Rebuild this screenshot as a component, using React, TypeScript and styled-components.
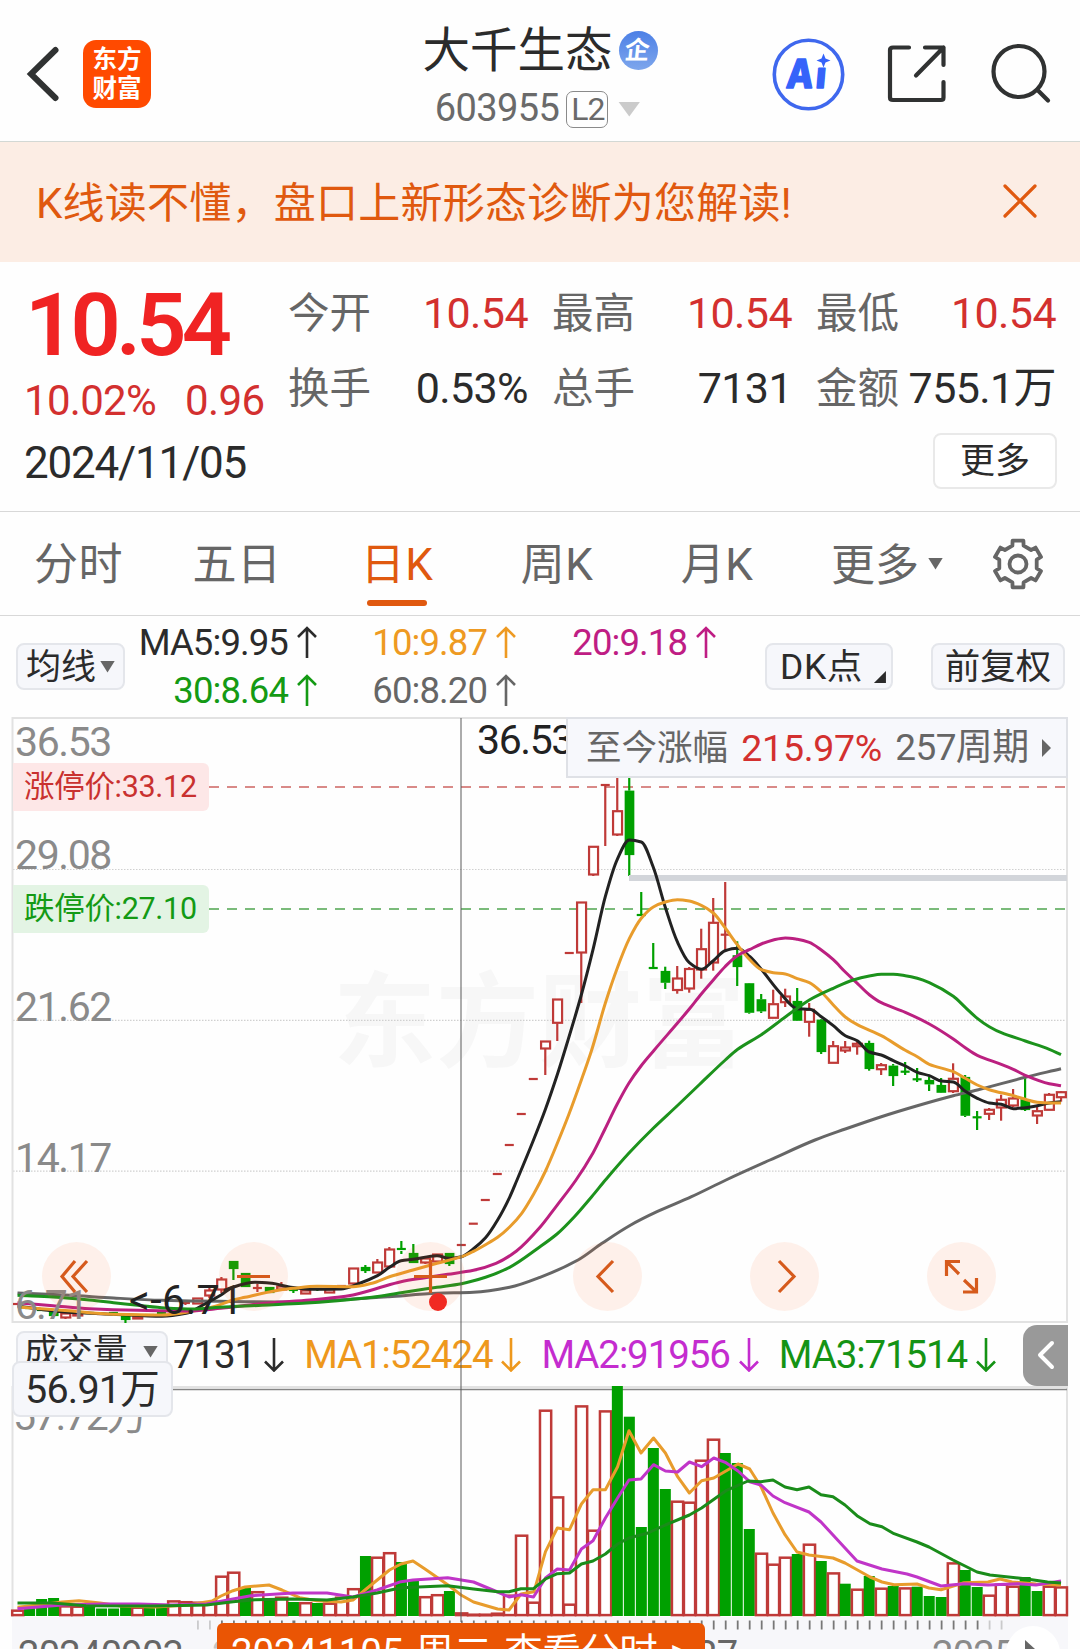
import React from "react";
import styled, { createGlobalStyle } from "styled-components";

const FONT = `Roboto, "Noto Sans CJK SC", sans-serif`;
const RED = "#bf3a38";
const GREEN = "#00a000";
const ORANGE = "#e0590f";

const GlobalStyle = createGlobalStyle`
  * { box-sizing: border-box; }
  html, body { margin: 0; padding: 0; background: #fff; }
  body { font-family: ${FONT}; width: 1080px; height: 1649px; overflow: hidden; }
`;

const Page = styled.main`
  width: 1080px;
  height: 1649px;
  overflow: hidden;
  background: #fefefe;
  color: #2b2b2b;
  display: flex;
  flex-direction: column;
`;

const Txt = styled.span<{ $size: number; $color?: string; $ls?: number; $weight?: number }>`
  font-size: ${(p) => p.$size}px;
  line-height: 1.2;
  color: ${(p) => p.$color ?? "#2b2b2b"};
  letter-spacing: ${(p) => p.$ls ?? 0}px;
  font-weight: ${(p) => p.$weight ?? 400};
  white-space: pre;
`;

/* ---------- header ---------- */

const Header = styled.header`
  height: 142px;
  flex: none;
  display: grid;
  grid-template-columns: 340px 400px 340px;
  border-bottom: 1px solid #d3d8d4;
`;

const HeaderLeft = styled.div`
  display: flex;
  align-items: center;
  gap: 21px;
  padding: 7px 0 0 25px;
`;

const Logo = styled.div`
  width: 68px;
  height: 68px;
  border-radius: 13px;
  background: #ff4a00;
  color: #fff;
  display: flex;
  flex-direction: column;
  align-items: center;
  justify-content: center;
  padding-bottom: 5px;
  font: 700 24.5px/29px "Noto Sans CJK SC", sans-serif;
`;

const HeaderTitle = styled.div`
  display: flex;
  flex-direction: column;
  align-items: center;
`;

const NameRow = styled.div`
  display: flex;
  align-items: center;
  gap: 6px;
  margin: 20px 0 0 0;
  height: 60px;
  & > :first-child { margin-top: 2px; }
`;

const Badge = styled.span`
  width: 39px;
  height: 39px;
  border-radius: 50%;
  background: linear-gradient(#4c80e6, #7ea6ec);
  color: #fff;
  display: flex;
  align-items: center;
  justify-content: center;
  font: 700 25px/36px "Noto Sans CJK SC", sans-serif;
  & > span { transform: translateY(-2px) skewX(-6deg); }
`;

const CodeRow = styled.div`
  display: flex;
  align-items: center;
  height: 44px;
  margin: 7px 0 0 -5px;
`;

const Level = styled.span`
  width: 42px;
  height: 37px;
  margin: 0 10px 0 7px;
  border: 1.5px solid #8a8a8a;
  border-radius: 7px;
  display: flex;
  align-items: center;
  justify-content: center;
  padding-left: 1px;
`;

const HeaderRight = styled.div`
  display: flex;
  align-items: center;
  gap: 42px;
  padding: 7px 0 0 32px;
`;

const Triangle = styled.i<{ $w: number; $h: number; $color: string }>`
  width: ${(p) => p.$w}px;
  height: ${(p) => p.$h}px;
  flex: none;
  background: ${(p) => p.$color};
  clip-path: polygon(0 0, 100% 0, 50% 100%);
`;

/* ---------- banner ---------- */

const Banner = styled.section`
  height: 120px;
  flex: none;
  background: #fcede4;
  display: flex;
  align-items: center;
  justify-content: space-between;
  padding: 4px 42px 0 36px;
  & > svg { margin-top: -6px; }
`;

/* ---------- quote ---------- */

const Quote = styled.section`
  height: 250px;
  flex: none;
  display: grid;
  grid-template-columns: 264px 792px;
  padding-left: 24px;
  border-bottom: 1px solid #d8d8d8;
`;

const PriceCol = styled.div`
  display: flex;
  flex-direction: column;
`;

const Price = styled.div`
  height: 76px;
  margin: 25px 0 0 1px;
  font-size: 88px;
  font-weight: 600;
  line-height: 76px;
  letter-spacing: -4.8px;
  color: #f02323;
`;

const ChangeRow = styled.div`
  display: flex;
  align-items: center;
  height: 50px;
  margin-top: 13px;
  gap: 29px;
`;

const DateRow = styled.div`
  height: 50px;
  margin-top: 12px;
  display: flex;
  align-items: center;
`;

const StatsCol = styled.div`
  display: flex;
  flex-direction: column;
  padding-top: 14px;
`;

const Stats = styled.div`
  display: grid;
  grid-template-columns: 240px 240px 240px;
  grid-auto-rows: 75px;
  column-gap: 24px;
`;

const Stat = styled.div`
  display: flex;
  align-items: center;
  justify-content: space-between;
`;

const MoreButton = styled.button`
  width: 124px;
  height: 56px;
  margin: 7px 0 0 645px;
  padding: 1px 0 0;
  border: 2px solid #e9e9e9;
  border-radius: 8px;
  background: #fff;
  font: 400 35px/50px ${FONT};
  color: #2b2b2b;
`;

/* ---------- tabs ---------- */

const Tabs = styled.nav`
  height: 104px;
  flex: none;
  display: grid;
  grid-template-columns: 157px repeat(4, 160px) 180px 82px;
  border-bottom: 1px solid #d8d8d8;
`;

const Tab = styled.div`
  display: flex;
  align-items: center;
  justify-content: center;
  gap: 9px;
  padding-top: 4px;
  font-size: 44px;
  line-height: 60px;
  color: #666;
  & > svg { margin-top: -4px; }
  & > i { margin-top: -4px; }
`;

const TabLabel = styled.span<{ $active?: boolean }>`
  display: flex;
  flex-direction: column;
  align-items: center;
  &::after {
    content: "";
    display: ${(p) => (p.$active ? "block" : "none")};
    width: 60px;
    height: 6px;
    margin: 8px 0 -14px;
    border-radius: 3px;
    background: ${ORANGE};
  }
`;

/* ---------- indicator bar ---------- */

const Toolbar = styled.section`
  height: 101px;
  flex: none;
  display: flex;
  align-items: center;
  padding-left: 16px;
`;

const Chip = styled.div<{ $w: number; $ml?: number }>`
  width: ${(p) => p.$w}px;
  height: 47px;
  margin-left: ${(p) => p.$ml ?? 0}px;
  flex: none;
  display: flex;
  align-items: center;
  justify-content: center;
  gap: 4px;
  border: 2px solid #e4e6eb;
  border-radius: 8px;
  background: #f6f7fb;
  & > span { margin-top: 2px; }
`;

const Corner = styled.i`
  align-self: flex-end;
  width: 12px;
  height: 12px;
  margin: 0 -8px 5px 7px;
  background: #2b2b2b;
  clip-path: polygon(100% 0, 100% 100%, 0 100%);
`;

const Legend = styled.div`
  width: 592px;
  flex: none;
  display: grid;
  grid-template-columns: 192px 199px 200px;
  grid-auto-rows: 48px;
`;

const LegendItem = styled.div`
  display: flex;
  align-items: center;
  justify-content: flex-end;
  gap: 9px;
`;

/* ---------- charts ---------- */

const Charts = styled.section`
  position: relative;
  flex: none;
  display: flex;
  flex-direction: column;
`;

const KPanel = styled.div`
  position: relative;
  height: 607px;
`;

const ChartSvg = styled.svg`
  position: relative;
  display: block;
`;

const AxisLabel = styled.span<{ $x: number; $y: number; $color?: string; $ls?: number }>`
  position: absolute;
  left: ${(p) => p.$x}px;
  top: ${(p) => p.$y}px;
  font-size: 41px;
  line-height: 44px;
  letter-spacing: ${(p) => p.$ls ?? -1.4}px;
  white-space: pre;
  color: ${(p) => p.$color ?? "#8a8a8a"};
`;

const LimitTag = styled.div<{ $y: number; $bg: string; $color: string }>`
  position: absolute;
  left: 13px;
  top: ${(p) => p.$y}px;
  width: 196px;
  height: 48px;
  padding: 0 0 2px 11px;
  border-radius: 0 6px 6px 0;
  background: ${(p) => p.$bg};
  color: ${(p) => p.$color};
  font-size: 30.5px;
  line-height: 47px;
  letter-spacing: -0.3px;
  white-space: nowrap;
`;

const Watermark = styled.div`
  position: absolute;
  left: 333px;
  top: 228px;
  font: 700 103px/140px "Noto Sans CJK SC", sans-serif;
  color: #f7f7f7;
`;

const RangeTip = styled.div`
  position: absolute;
  left: 566px;
  top: 0;
  width: 502px;
  height: 61px;
  padding: 1px 15px 0 18px;
  display: flex;
  align-items: center;
  justify-content: space-between;
  background: #f7f8fc;
  border: 2px solid #dfe1e6;
`;

const RightArrow = styled.i<{ $w: number; $h: number }>`
  width: ${(p) => p.$w}px;
  height: ${(p) => p.$h}px;
  flex: none;
  background: #666;
  clip-path: polygon(0 0, 100% 50%, 0 100%);
`;

const NavRow = styled.div`
  position: absolute;
  left: 42px;
  top: 525px;
  display: flex;
  gap: 108px;
`;

const NavButton = styled.div`
  width: 69px;
  height: 69px;
  border-radius: 50%;
  background: rgba(250, 105, 35, 0.09);
`;

const LiveDot = styled.i`
  position: absolute;
  left: 429px;
  top: 576px;
  width: 18px;
  height: 18px;
  border-radius: 50%;
  background: #f12a22;
`;

const CrossV = styled.i`
  position: absolute;
  left: 460px;
  top: 1px;
  width: 2px;
  height: 904px;
  background: rgba(90, 90, 90, 0.5);
`;

const VolHeader = styled.div`
  height: 62px;
  display: flex;
  align-items: center;
  padding: 0 12px 0 16px;
`;

const VolChip = styled.div`
  width: 152px;
  height: 47px;
  flex: none;
  align-self: flex-start;
  margin-top: 7px;
  display: flex;
  align-items: center;
  justify-content: space-between;
  padding: 0 8px 6px 6px;
  border: 2px solid #e4e6eb;
  border-radius: 8px;
  background: #f6f7fb;
`;

const VolItems = styled.div`
  flex: 1;
  display: flex;
  align-items: center;
  gap: 20px;
  padding-left: 5px;
`;

const VolItem = styled.div`
  display: flex;
  align-items: center;
  gap: 9px;
`;

const SideButton = styled.div`
  width: 45px;
  height: 61px;
  flex: none;
  display: flex;
  align-items: center;
  justify-content: center;
  border-radius: 14px 0 0 14px;
  background: #999;
`;

const VolPanel = styled.div`
  position: relative;
  height: 231px;
`;

const VolTag = styled.div`
  position: absolute;
  left: 12px;
  top: -25px;
  width: 161px;
  height: 56px;
  padding-left: 11px;
  border: 2px solid #e4e6eb;
  border-radius: 8px;
  background: #f6f7fb;
  font-size: 39.5px;
  line-height: 54px;
  letter-spacing: -0.8px;
  white-space: nowrap;
  color: #2b2b2b;
`;

const TimeAxis = styled.div`
  position: relative;
  height: 32px;
  margin: 0 12px;
  overflow: hidden;
  background: #f7f7fa;
`;

const TimeLabel = styled.span<{ $x: number; $color?: string }>`
  position: absolute;
  left: ${(p) => p.$x}px;
  top: 16px;
  font-size: 38px;
  line-height: 44px;
  letter-spacing: -0.7px;
  color: ${(p) => p.$color ?? "#666"};
`;

const DateTag = styled.div`
  position: absolute;
  left: 205px;
  top: 6px;
  width: 488px;
  height: 60px;
  padding: 0 14px;
  display: flex;
  align-items: flex-start;
  gap: 12px;
  border-radius: 6px 6px 0 0;
  background: #ea5504;
  color: #fff;
  font-size: 38.5px;
  line-height: 60px;
  letter-spacing: -0.1px;
  white-space: pre;
`;

const PlayButton = styled.div`
  position: absolute;
  left: 994px;
  top: 9px;
  width: 54px;
  height: 54px;
  padding: 14px 0 0 19px;
  border-radius: 50%;
  background: #fff;
  & > i { display: block; }
`;

/* ---------- data ---------- */

const X = (i: number) => 17.5 + i * 11.995;

// [index, bodyTop, bodyBottom, high, low, up]
type Candle = [number, number, number, number, number, 0 | 1];
const candles: Candle[] = [
  [0, 1304, 1304, 1304, 1304, 1], [1, 1308, 1308, 1307, 1309, 0], [2, 1310, 1310, 1309, 1311, 0],
  [3, 1311, 1316, 1311, 1316, 0], [4, 1313, 1318, 1312, 1319, 1], [5, 1313, 1316, 1313, 1316, 1],
  [6, 1313, 1313, 1313, 1313, 0], [7, 1314, 1314, 1313, 1315, 1], [8, 1313, 1314, 1312, 1315, 0],
  [9, 1315, 1320, 1314, 1323, 0], [10, 1316, 1319, 1316, 1319, 1], [11, 1315, 1315, 1315, 1315, 0],
  [12, 1313, 1313, 1313, 1313, 0], [13, 1309, 1309, 1309, 1309, 1], [14, 1303, 1303, 1302, 1305, 1],
  [15, 1298, 1304, 1298, 1304, 1], [16, 1290, 1296, 1287, 1298, 1], [17, 1279, 1290, 1277, 1293, 1],
  [18, 1261, 1269, 1261, 1280, 0], [19, 1273, 1287, 1273, 1287, 0], [20, 1288, 1288, 1284, 1292, 1],
  [21, 1287, 1293, 1287, 1293, 0], [22, 1286, 1290, 1282, 1290, 1], [23, 1290, 1290, 1288, 1293, 0],
  [24, 1290, 1294, 1290, 1294, 1], [25, 1289, 1290, 1288, 1291, 0], [26, 1289, 1293, 1289, 1293, 1],
  [27, 1286, 1286, 1286, 1286, 1], [28, 1268, 1284, 1268, 1284, 1], [29, 1267, 1271, 1265, 1273, 0],
  [30, 1262, 1273, 1259, 1273, 1], [31, 1249, 1267, 1247, 1267, 1], [32, 1249, 1251, 1241, 1254, 0],
  [33, 1253, 1263, 1244, 1263, 0], [34, 1258, 1263, 1257, 1264, 1], [35, 1254, 1262, 1254, 1262, 1],
  [36, 1253, 1264, 1253, 1266, 0], [37, 1245, 1245, 1245, 1245, 1], [38, 1223.7, 1223.7, 1223.7, 1223.7, 1],
  [39, 1200, 1200, 1200, 1200, 1], [40, 1174, 1174, 1174, 1174, 1], [41, 1145, 1145, 1145, 1145, 1],
  [42, 1114, 1114, 1114, 1114, 1], [43, 1079, 1079, 1079, 1079, 1], [44, 1041, 1049, 1041, 1075, 1],
  [45, 999, 1023.3, 999, 1041, 1], [46, 953, 953, 953, 953, 1], [47, 902, 953, 902, 1003, 1],
  [48, 846.3, 875, 846, 876, 1], [49, 785, 785, 785, 846, 1], [50, 810.7, 835, 770, 836, 1],
  [51, 790.7, 855, 770, 876, 0], [52, 915, 915, 892, 916, 0], [53, 968, 968, 943, 969, 0],
  [54, 971, 982.7, 966.7, 989, 0], [55, 978, 990.5, 966, 993.7, 1], [56, 968.5, 989, 967, 992.7, 1],
  [57, 948.7, 970, 928.7, 978.7, 1], [58, 922.3, 963, 898, 970.7, 1], [59, 934.7, 934.7, 882, 950, 1],
  [60, 955.3, 967, 941.3, 986, 0], [61, 983.3, 1012.7, 983, 1013.7, 0], [62, 999.3, 1011.3, 994, 1013, 0],
  [63, 1003.7, 1018.3, 989.7, 1018, 1], [64, 996, 1002.7, 988.7, 1007, 1], [65, 1001, 1020.7, 988, 1021, 0],
  [66, 1009.3, 1022.3, 1003, 1036.7, 1], [67, 1019.7, 1052, 1019, 1054, 0], [68, 1045.7, 1063.3, 1041, 1063, 1],
  [69, 1047, 1051, 1041, 1053, 1], [70, 1043.3, 1046.7, 1042, 1054.7, 1], [71, 1043, 1069, 1040.7, 1070.7, 0],
  [72, 1064.7, 1069.7, 1063, 1075, 1], [73, 1065.7, 1076, 1064, 1086, 0], [74, 1071.7, 1071.7, 1062, 1075, 0],
  [75, 1079.3, 1079.3, 1068, 1082, 0], [76, 1080, 1084.3, 1076.7, 1091, 0], [77, 1085, 1092.7, 1078, 1093, 0],
  [78, 1078.3, 1091.7, 1063.3, 1093, 1], [79, 1077, 1115.7, 1075, 1117, 0], [80, 1117.3, 1117.3, 1111, 1130, 0],
  [81, 1109.3, 1114.3, 1108, 1120, 1], [82, 1099.3, 1108, 1094.7, 1120.7, 1], [83, 1098, 1106, 1089, 1107, 1],
  [84, 1099.3, 1110, 1078, 1111, 0], [85, 1110.7, 1116, 1106.7, 1124, 1], [86, 1094.3, 1110.3, 1093, 1110, 1],
  [87, 1091.7, 1097.7, 1091, 1101.7, 1],
];

const priceLines: { color: string; pts: string }[] = [
  {
    color: "#666",
    pts: "17.5,1293 65,1295 113.6,1298 162,1300.3 220,1301.3 293,1302 337.5,1300 389,1296.7 437,1293.3 473.5,1292.3 509.6,1287.3 540,1277.3 578,1260 602,1243.3 629.5,1225.7 657,1211.7 691.5,1196.7 726,1180 770,1160 815,1140 845.3,1129 881.3,1116.7 917.3,1105.7 953.3,1095.7 977.3,1090 1025.3,1077.3 1061,1068.7",
  },
  {
    color: "#222",
    pts: "17.5,1306 65,1312 113.6,1314.3 162,1316.3 186,1313.3 203,1305 221,1295 233,1287.3 255,1282.3 272,1283.3 289,1287 310,1289.3 341,1289 358,1284 377.5,1275.7 389.5,1267.3 401,1260.7 413,1259.3 437,1255.7 449,1258.3 461.5,1256.7 473.5,1248.7 485.5,1237.7 497.6,1220 509.6,1197.3 517,1180 533.5,1140 545.5,1109 557.5,1074 565,1050 581,996 593.3,948.3 605.3,896.7 617.3,859.3 629.3,840 641.3,842 653.3,867.3 665.3,907.3 677.3,941.7 689.3,962.7 701.3,969.3 713.3,960.7 725,950.7 737.3,948.3 750,956.7 761.3,969.3 780,992.7 797.3,1008.7 810,1009.3 821.3,1016.7 833.3,1025.7 845.3,1035.7 857.3,1040.7 869.3,1052 881.3,1055 893.3,1060.7 905.3,1066 917.3,1072.3 929.3,1075.7 941.3,1081 953.3,1082 965.3,1091.3 977.3,1098.3 989.3,1103 1001.3,1104.3 1013.3,1108.7 1025.3,1107.7 1037.3,1105.7 1049.3,1103 1061,1101.7",
  },
  {
    color: "#e89c2c",
    pts: "17.5,1307 65,1310.5 113.6,1314.3 162,1315 213.5,1306.7 233,1300 245,1297.3 275.5,1290.7 293,1288.3 317,1286.3 353,1286.7 372,1283.3 389.5,1276.7 413,1270 437,1263.3 461.5,1256.7 473.5,1251.3 485.5,1244.7 497.6,1237.3 509.6,1227 521.7,1213.3 533.7,1194 545.5,1171 557,1144 569,1114 581,1081 591.7,1050 605.3,1003.3 617.3,968 629.3,938.7 641.3,918.3 653.3,907 665.3,902 677.3,899.7 689.3,901 701.3,905.3 713.3,913 725,927.7 737.3,944.7 749.3,959.3 761.3,969.7 773.3,972.7 785.3,974 797.3,978.7 809.3,982.7 821.3,992 833.3,1005 845.3,1017 857.3,1024.7 881.3,1035.7 905.3,1050.3 917.3,1056.7 929.3,1064.3 953.3,1071.7 965.3,1078.3 977.3,1085 989.3,1089.7 1013.3,1095.7 1025.3,1099.3 1037.3,1102.3 1049.3,1103 1061,1103",
  },
  {
    color: "#bb2080",
    pts: "17.5,1302.7 53,1305.7 89.5,1308.7 138,1310.3 185,1311 221,1308.3 241,1306 268.6,1303 310,1300 337.5,1297.3 353,1295 377.5,1288.3 401,1281.7 425,1277.7 447.7,1274.3 473.5,1270.3 496,1263.3 516.5,1251 540,1227.3 557,1205.3 576,1180 593,1153 605,1129 617,1104.5 629,1083 641,1066 654.3,1050 677.3,1023.3 689.3,1009 701.3,994 713.3,980 725,966.7 737.3,955.7 749.3,949.7 761.3,944 773.3,940 785.3,938 797.3,939.3 809.3,942.3 821.3,950 833.3,959.7 845.3,972 857.3,983.3 869.3,994.7 881.3,1002.7 905.3,1012.3 929.3,1024 953.3,1039 965.3,1047.7 977.3,1055.3 1001.3,1064.3 1013.3,1069.3 1025.3,1075.3 1049.3,1083.7 1061,1085.7",
  },
  {
    color: "#1c921c",
    pts: "17.5,1295.3 53,1297 89.5,1300 113.6,1302.7 138,1305.3 165,1308 193,1309 220,1307.3 262,1305.3 303,1303.3 337.5,1300.7 372,1297.3 401,1292.7 437,1287.3 461.5,1283.7 485.5,1277.3 509.6,1267.3 540,1246.7 557,1234 574.4,1216.7 591.7,1196.7 605.4,1180 629,1153 653,1128.5 677,1106 700,1084 725.3,1060 737.7,1049.3 761.3,1034.7 785.3,1017 797.3,1008.3 809.3,1000 833.3,988.3 853.3,980 869.3,976 881.3,974.3 893.3,974.3 905.3,975.7 917.3,978.3 929.3,982.7 953.3,996.3 965.3,1007.3 977.3,1018.3 989.3,1026.7 1001.3,1032.7 1025.3,1041 1049.3,1049.3 1061,1054.7",
  },
];

// Top edge of each volume bar; a negative number marks a falling day.
const volumes: number[] = [
  1610, -1605, -1599, -1598, 1605.7, 1606, -1607, -1608.5, -1608.5, -1607, 1607, -1607.5, -1607.5, 1600.7, 1601.5,
  1602, 1601.5, 1576, 1572, -1587.5, 1591.5, -1598, 1597, -1602, 1602.5, -1603, 1603, 1597, 1588.5, -1556, 1557,
  1552.5, -1562, -1580.7, 1596.5, 1594.5, -1591, 1612.7, 1614, 1614, 1613, 1595, 1535, 1602, 1410, 1496.7, 1604,
  1405.7, 1530, 1410.7, -1386, -1416.7, -1527, -1448, -1489, 1501, 1502, 1460, 1439, -1453, -1463, -1529, 1553,
  1564, 1557, -1554, 1544, -1561, 1572.7, -1583.7, 1589, -1576, 1588, -1586, 1587.7, -1586.7, -1596, -1597, 1562.7,
  -1570, -1587, 1595, 1584, 1586, -1577, -1591, 1586, 1586.7,
];

const volumeLines: { color: string; pts: string }[] = [
  {
    color: "#e89c2c",
    pts: "17.5,1607.3 38,1605 62,1602 79,1600.7 100,1603 120.5,1606 155,1607 189,1605 212,1601 221,1596 233,1590.7 245,1587 269,1585 282,1590 299.6,1597.7 317,1600.7 341,1602 353,1600 365,1590 389.5,1570 401,1564 413,1561 425,1569 447.7,1584.7 461,1595 473.5,1602 497.6,1609 509,1610 521,1594 534,1591.7 545.5,1551.7 557.3,1528 569.5,1529.7 581.4,1504 593,1489.7 605.4,1489.7 617.6,1466.7 629,1430.7 641,1453 653.5,1438 665.4,1453 677.6,1476.7 689.4,1493 701.6,1480.7 713.8,1478 738,1464 749.7,1469 761,1486.7 773,1513 785,1534.7 797,1552 809,1555 833,1558 845,1563 870,1577 882,1582 894,1584.7 917,1584 929,1588 941,1589.7 964,1582.7 988,1582 1000,1579 1012,1582 1036,1584 1061,1585",
  },
  {
    color: "#c035c8",
    pts: "17.5,1608.7 62,1605 103,1604 138,1604 172,1605 206.6,1604 233,1599 251,1595.7 293,1593 327,1593 353,1597 377,1590 401,1581.7 413,1580 447.7,1577.7 473.5,1582 497.6,1592 509,1597 521,1594.7 533.5,1597 545.5,1578 557.3,1569 569.5,1570 581.4,1549 593,1540.7 605.4,1518 617.6,1498 629,1480 641,1479 653.5,1464.7 665.4,1471 677.6,1472 689.4,1462 701.6,1466.7 713.8,1458 726,1462.7 738,1471 749.7,1481.7 761,1485 773,1496 785,1502.7 809,1512 821,1522 845,1548 857,1561 882,1569 907,1574 917,1577 941,1586 964,1583.7 988,1585 1018,1583.7 1036,1585 1061,1581",
  },
  {
    color: "#1a8c1a",
    pts: "17.5,1603 52,1603 86,1605.7 155,1606 206.6,1605 233,1601.7 255,1599.7 293,1599 327,1600 353,1597 377,1593 401,1587.7 447.7,1585.7 473.5,1589 497.6,1591.7 509,1591.7 521,1588.7 533.5,1588.7 545.5,1579 557.3,1573.7 569.5,1573 581.4,1564 593,1561 605.4,1554 617.6,1544 629,1538 648,1533 665.4,1525 689.4,1515 701.6,1508 726,1490.7 748,1481 761,1481.7 773,1480 785,1487 797,1489.7 809,1487 821,1494.7 833,1496.7 845,1505 857,1515.7 870,1523.7 882,1526.7 894,1533.7 917,1542 929,1547 953,1560 977,1572 990,1575 1025,1578.7 1047.5,1582 1061,1583",
  },
];

const stats = [
  { label: "今开", value: "10.54", up: true },
  { label: "最高", value: "10.54", up: true },
  { label: "最低", value: "10.54", up: true },
  { label: "换手", value: "0.53%", up: false },
  { label: "总手", value: "7131", up: false },
  { label: "金额", value: "755.1万", up: false },
];

const averages = [
  { text: "MA5:9.95", color: "#2b2b2b" },
  { text: "10:9.87", color: "#ee9a22" },
  { text: "20:9.18", color: "#bf1d84" },
  { text: "30:8.64", color: "#149a14" },
  { text: "60:8.20", color: "#666" },
];

/* ---------- pieces ---------- */

// Turns "x,y x,y ..." into a cubic path whose tangents follow the neighbouring points.
function smooth(pts: string) {
  const p = pts.split(" ").map((s) => s.split(",").map(Number));
  const slope = (a: number, b: number) => (p[b][1] - p[a][1]) / (p[b][0] - p[a][0]);
  const m = p.map((_, i) => {
    if (i === 0) return slope(0, 1);
    if (i === p.length - 1) return slope(i - 1, i);
    const l = slope(i - 1, i);
    const r = slope(i, i + 1);
    return l * r <= 0 ? 0 : (2 * l * r) / (l + r);
  });
  return p
    .map(([x, y], i) => {
      if (i === 0) return `M${x} ${y}`;
      const [px, py] = p[i - 1];
      const h = (x - px) / 3;
      return `C${(px + h).toFixed(1)} ${(py + m[i - 1] * h).toFixed(1)} ${(x - h).toFixed(1)} ${(y - m[i] * h).toFixed(1)} ${x} ${y}`;
    })
    .join("");
}

const Arrow = ({ color, down }: { color: string; down?: boolean }) => (
  <svg width="20" height="34" viewBox="0 0 20 34" fill="none" stroke={color} strokeWidth="2.6">
    <path d={down ? "M10 0V33M1 23.5l9 9 9-9" : "M10 32V2M1 11l9-9 9 9"} />
  </svg>
);

function CandleShape({ c }: { c: Candle }) {
  const [i, top, bottom, high, low, up] = c;
  const x = X(i);
  const color = up ? RED : GREEN;
  const flat = bottom - top < 2.6;
  return (
    <g stroke={color} strokeWidth="2.2">
      {high < top && <line x1={x} x2={x} y1={high} y2={top} />}
      {low > bottom && <line x1={x} x2={x} y1={bottom} y2={low} />}
      {flat ? (
        <line x1={x - 4.5} x2={x + 4.5} y1={top} y2={top} />
      ) : up ? (
        <rect x={x - 4.2} y={top + 0.5} width="9" height={bottom - top - 1} fill="#fff" />
      ) : (
        <rect x={x - 3.5} y={top + 1} width="7.5" height={bottom - top - 2} fill={color} />
      )}
    </g>
  );
}

function PriceChart() {
  return (
    <ChartSvg width="1080" height="607" viewBox="0 717 1080 607">
      <g stroke="#d0d0d0" strokeWidth="1.2" strokeDasharray="1.5 1.5">
        <line x1="13" x2="1067" y1="869.5" y2="869.5" />
        <line x1="13" x2="1067" y1="1020.4" y2="1020.4" />
        <line x1="13" x2="1067" y1="1171.2" y2="1171.2" />
      </g>
      <path d="M12.5 1322V718H1067V1322Z" fill="none" stroke="#e2e2e2" strokeWidth="2" />
      <line x1="209" x2="1065" y1="787" y2="787" stroke="#d98a88" strokeWidth="2" strokeDasharray="10 8" />
      <line x1="209" x2="1065" y1="909" y2="909" stroke="#4fa54f" strokeWidth="1.5" strokeDasharray="10 8" />
      {candles.map((c) => (
        <CandleShape key={c[0]} c={c} />
      ))}
      <rect x="629" y="875" width="438" height="6" fill="#d2d5da" />
      {priceLines.map((l) => (
        <path key={l.color} d={smooth(l.pts)} fill="none" stroke={l.color} strokeWidth="3" strokeLinejoin="round" />
      ))}
    </ChartSvg>
  );
}

function VolumeChart() {
  return (
    <ChartSvg width="1080" height="231" viewBox="0 1386 1080 231">
      <path d="M12.5 1617V1387H1067V1617" fill="none" stroke="#e2e2e2" strokeWidth="2" />
      <line x1="13" x2="1067" y1="1389.5" y2="1389.5" stroke="#858585" strokeWidth="1.3" />
      {volumes.map((v, i) => {
        const top = Math.abs(v);
        return v > 0 ? (
          <rect
            key={i}
            x={X(i) - 5.3}
            y={top + 0.7}
            width="11.2"
            height={Math.max(0.6, 1614.6 - top - 0.2)}
            fill="#fff"
            stroke={RED}
            strokeWidth="2.5"
          />
        ) : (
          <rect key={i} x={X(i) - 5.4} y={top} width="11" height={1616 - top} fill={GREEN} />
        );
      })}
      {volumeLines.map((l) => (
        <polyline key={l.color} points={l.pts} fill="none" stroke={l.color} strokeWidth="3" strokeLinejoin="round" />
      ))}
    </ChartSvg>
  );
}

const navIcons = [
  "M33 19L20 34.5 33 50M45 19L31 34.5 45 50",
  "M18 34.5H51",
  "M18 34.5H51M34.5 18V51",
  "M40 19L25 34.5 40 50",
  "M29 19L44 34.5 29 50",
  "M33 19.5H19.5V34M20 20L32 32M36 50H49.5V36M49 49.5L37 38",
];

const gearPath = Array.from({ length: 6 }, (_, k) => {
  const p = (deg: number, r: number) => {
    const a = ((deg + k * 60 - 90) * Math.PI) / 180;
    return `${(27 + r * Math.cos(a)).toFixed(1)} ${(27 + r * Math.sin(a)).toFixed(1)}`;
  };
  return `${k ? "L" : "M"}${p(-13, 24)}L${p(13, 24)}L${p(17, 19.2)}L${p(43, 19.2)}`;
}).join("");

export default function App() {
  return (
    <Page>
      <GlobalStyle />
      <Header>
        <HeaderLeft>
          <svg width="37" height="60" viewBox="0 0 37 60" fill="none" stroke="#303232" strokeWidth="6" strokeLinecap="round">
            <path d="M30.500 6L6 30 30.500 54" strokeLinejoin="miter" />
          </svg>
          <Logo>
            <span>东方</span>
            <span>财富</span>
          </Logo>
        </HeaderLeft>
        <HeaderTitle>
          <NameRow>
            <Txt $size={47.5}>大千生态</Txt>
            <Badge>
              <span>企</span>
            </Badge>
          </NameRow>
          <CodeRow>
            <Txt $size={38} $color="#6a6a6a" $ls={-0.6}>603955</Txt>
            <Level>
              <Txt $size={32} $color="#6a6a6a" $ls={-1}>L2</Txt>
            </Level>
            <Triangle $w={22} $h={15} $color="#cbcbcb" />
          </CodeRow>
        </HeaderTitle>
        <HeaderRight>
          <svg width="73" height="73" viewBox="0 0 73 73">
            <circle cx="36.500" cy="36.500" r="34.200" fill="#fff" stroke="#3f68ee" strokeWidth="3.600" />
            <g fill="#3563fa" stroke="#3563fa" strokeWidth="1.500" strokeLinejoin="round" fontFamily="Inter, sans-serif" fontWeight="800" transform="translate(0 50) skewX(-5)">
              <text x="13.500" y="0" fontSize="40" textLength="27" lengthAdjust="spacingAndGlyphs">A</text>
              <text x="43" y="0" fontSize="36">ı</text>
            </g>
            <path d="M51.500 15.500l2 5 5 2-5 2-2 5-2-5-5-2 5-2z" fill="#3563fa" />
          </svg>
          <svg width="60" height="60" viewBox="0 0 60 60" fill="none" stroke="#303232" strokeWidth="4.200" strokeLinecap="round" strokeLinejoin="round">
            <path d="M22 3.500H6Q3 3.500 3 6V53.500Q3 56 6 56H54Q56.500 56 56.500 53.500V38M38 3.500H56.500V21M56.500 3.500L29 31.500" />
          </svg>
          <svg width="62" height="62" viewBox="0 0 62 62" fill="none" stroke="#303232" strokeWidth="4.200" strokeLinecap="round">
            <circle cx="30" cy="28.500" r="25.500" />
            <path d="M48.500 47L59 57.500" />
          </svg>
        </HeaderRight>
      </Header>

      <Banner>
        <Txt $size={42} $color={ORANGE} $ls={0.25}>K线读不懂，盘口上新形态诊断为您解读!</Txt>
        <svg width="36" height="36" viewBox="0 0 36 36" stroke={ORANGE} strokeWidth="3.200" strokeLinecap="round">
          <path d="M3 3L33 33M33 3L3 33" />
        </svg>
      </Banner>

      <Quote>
        <PriceCol>
          <Price>10.54</Price>
          <ChangeRow>
            <Txt $size={42} $color="#d3302f" $ls={-0.7}>10.02%</Txt>
            <Txt $size={42} $color="#d3302f" $ls={-0.6}>0.96</Txt>
          </ChangeRow>
          <DateRow>
            <Txt $size={44} $ls={-1.2}>2024/11/05</Txt>
          </DateRow>
        </PriceCol>
        <StatsCol>
          <Stats>
            {stats.map((s) => (
              <Stat key={s.label}>
                <Txt $size={41.5} $color="#666">{s.label}</Txt>
                <Txt $size={43} $color={s.up ? "#d3302f" : "#2b2b2b"} $ls={-0.6}>{s.value}</Txt>
              </Stat>
            ))}
          </Stats>
          <MoreButton>更多</MoreButton>
        </StatsCol>
      </Quote>

      <Tabs>
        {["分时", "五日", "日K", "周K", "月K"].map((t) => (
          <Tab key={t}>
            <TabLabel $active={t === "日K"}>
              <Txt $size={44} $color={t === "日K" ? ORANGE : "#666"} $ls={0.4}>{t}</Txt>
            </TabLabel>
          </Tab>
        ))}
        <Tab>
          更多
          <Triangle $w={15} $h={12} $color="#666" />
        </Tab>
        <Tab>
          <svg width="54" height="54" viewBox="0 0 54 54" fill="none" stroke="#666" strokeWidth="3.800" strokeLinejoin="round">
            <path d={gearPath + "Z"} />
            <circle cx="27" cy="27" r="8.500" />
          </svg>
        </Tab>
      </Tabs>

      <Toolbar>
        <Chip $w={109}>
          <Txt $size={35}>均线</Txt>
          <Triangle $w={15} $h={12} $color="#666" />
        </Chip>
        <Legend>
          {averages.map((a) => (
            <LegendItem key={a.text}>
              <Txt $size={36.5} $color={a.color} $ls={-0.9}>{a.text}</Txt>
              <Arrow color={a.color} />
            </LegendItem>
          ))}
        </Legend>
        <Chip $w={128} $ml={48}>
          <Txt $size={35.5} $ls={0.6}>DK点</Txt>
          <Corner />
        </Chip>
        <Chip $w={134} $ml={38}>
          <Txt $size={35.5}>前复权</Txt>
        </Chip>
      </Toolbar>

      <Charts>
        <KPanel>
          <Watermark>东方财富</Watermark>
          <PriceChart />
          <AxisLabel $x={15} $y={3}>36.53</AxisLabel>
          <AxisLabel $x={15} $y={116}>29.08</AxisLabel>
          <AxisLabel $x={15} $y={268}>21.62</AxisLabel>
          <AxisLabel $x={15} $y={419}>14.17</AxisLabel>
          <AxisLabel $x={15} $y={566} $ls={-2}>6.71</AxisLabel>
          <AxisLabel $x={477} $y={1} $color="#222">36.53</AxisLabel>
          <AxisLabel $x={129} $y={561} $color="#222" $ls={0.4}>{"<-6.71"}</AxisLabel>
          <LimitTag $y={46} $bg="#fde7e7" $color="#c9312f">涨停价:33.12</LimitTag>
          <LimitTag $y={168} $bg="#e3f4e4" $color="#149a14">跌停价:27.10</LimitTag>
          <RangeTip>
            <Txt $size={35.5} $color="#666">至今涨幅</Txt>
            <Txt $size={37.5} $color="#d3302f" $ls={-0.3}>215.97%</Txt>
            <Txt $size={37} $color="#666" $ls={-0.6}>257周期</Txt>
            <RightArrow $w={9} $h={18} />
          </RangeTip>
          <NavRow>
            {navIcons.map((d) => (
              <NavButton key={d}>
                <svg width="69" height="69" viewBox="0 0 69 69" fill="none" stroke="#d65a1c" strokeWidth="3.200">
                  <path d={d} />
                </svg>
              </NavButton>
            ))}
          </NavRow>
          <LiveDot />
        </KPanel>

        <VolHeader>
          <VolChip>
            <Txt $size={34.500}>成交量</Txt>
            <Triangle $w={15} $h={12} $color="#666" />
          </VolChip>
          <VolItems>
            {[
              { text: "7131", color: "#2b2b2b" },
              { text: "MA1:52424", color: "#ee981c" },
              { text: "MA2:91956", color: "#c42ccf" },
              { text: "MA3:71514", color: "#149314" },
            ].map((v) => (
              <VolItem key={v.text}>
                <Txt $size={38.5} $color={v.color} $ls={-1.1}>{v.text}</Txt>
                <Arrow color={v.color} down />
              </VolItem>
            ))}
          </VolItems>
          <SideButton>
            <svg width="18" height="30" viewBox="0 0 18 30" fill="none" stroke="#fff" strokeWidth="4" strokeLinecap="round" strokeLinejoin="round">
              <path d="M15 3L3 15 15 27" />
            </svg>
          </SideButton>
        </VolHeader>

        <VolPanel>
          <VolumeChart />
          <AxisLabel $x={13} $y={8} $ls={-1.8}>57.72万</AxisLabel>
          <VolTag>56.91万</VolTag>
        </VolPanel>

        <TimeAxis>
          <svg width="1056" height="12" viewBox="12 0 1056 12">
            {Array.from({ length: 68 }, (_, k) => {
              const i = k + 15;
              const x = X(i) + 0.5;
              const opacity = i < 17 || i > 80 ? 0.35 : 1;
              return (
                <line key={i} x1={x} x2={x} y1="0.5" y2={i === 23 || i === 53 ? 6 : 9.5} stroke="#777" strokeWidth={i === 23 || i === 53 ? 3 : 1.8} opacity={opacity} />
              );
            })}
          </svg>
          <TimeLabel $x={6}>20240903</TimeLabel>
          <TimeLabel $x={200} $color="#c4c4c4">2</TimeLabel>
          <TimeLabel $x={684}>27</TimeLabel>
          <TimeLabel $x={920} $color="#8a8a8a">2025</TimeLabel>
          <DateTag>
            <span>20241105</span>
            <span>周二</span>
            <span>查看分时</span>
            <span>&gt;</span>
          </DateTag>
          <PlayButton>
            <RightArrow $w={10} $h={18} />
          </PlayButton>
        </TimeAxis>
        <CrossV />
      </Charts>
    </Page>
  );
}
